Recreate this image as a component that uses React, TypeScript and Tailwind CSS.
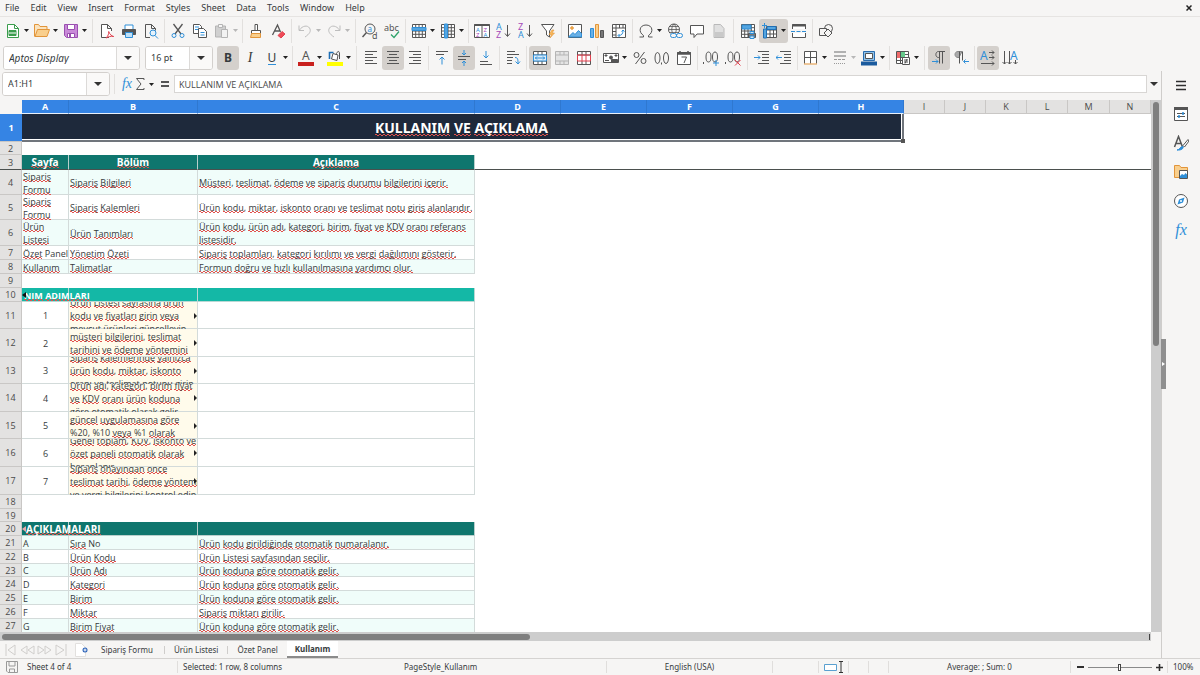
import type { ReactNode } from 'react'

const INK = '#555555'
const BLUE = '#2f8fd8'

function Ic({ children, c = INK }: { children: ReactNode; c?: string }) {
  return (
    <svg viewBox="0 0 16 16" className="h-4 w-4 shrink-0" fill="none" stroke={c}>
      {children}
    </svg>
  )
}

function Caret({ dim }: { dim?: boolean }) {
  return (
    <svg viewBox="0 0 5 3" className="h-[3px] w-[5px] shrink-0">
      <path d="M0 0h5L2.5 3z" fill={dim ? '#b8b8b8' : '#222'} />
    </svg>
  )
}

function BigCaret() {
  return (
    <svg viewBox="0 0 8 4" className="h-1 w-2 shrink-0">
      <path d="M0 0h8L4 4z" fill="#333" />
    </svg>
  )
}

type ToolProps = { label: string; on?: boolean; menu?: boolean; dim?: boolean; children: ReactNode }

function Tool({ label, on, menu, dim, children }: ToolProps) {
  return (
    <div className={`flex shrink-0 items-center rounded-[3px] ${on ? 'bg-[#d4d0cc]' : ''}`}>
      <button type="button" aria-label={label} className="flex h-6 w-[22px] items-center justify-center">
        {children}
      </button>
      {menu && (
        <button type="button" aria-label={`${label} options`} className="flex h-6 w-[7px] items-center justify-start">
          <Caret dim={dim} />
        </button>
      )}
    </div>
  )
}

function Sep({ wide }: { wide?: boolean }) {
  return (
    <div className={`flex h-6 shrink-0 justify-center ${wide ? 'w-[7px]' : 'w-[5px]'}`}>
      <div className="w-px bg-[#e2e0de]" />
    </div>
  )
}

const GRID = 'M1.5 1.5h13v13h-13zM1.5 4.7h13M1.5 8h13M1.5 11.3h13M4.7 1.5v13M8 1.5v13M11.3 1.5v13'

type SortProps = { top: string; bottom: string; topColor: string; bottomColor: string }

function SortGlyph({ top, bottom, topColor, bottomColor }: SortProps) {
  return (
    <Ic>
      <text x="0" y="7" fontSize="9" fill={topColor} stroke="none">{top}</text>
      <text x="0" y="15" fontSize="9" fill={bottomColor} stroke="none">{bottom}</text>
      <path d="M11.5 2v11M9 10.5l2.500 3 2.500-3" />
    </Ic>
  )
}

function StandardBar() {
  return (
    <div className="flex h-7 items-center border-t border-[#e6e4e2] pl-0.5">
      <Tool label="New" menu>
        <Ic c="#3a9d4c">
          <path d="M2.5 1.5h7l4 4v9h-11z" fill="#fff" />
          <path d="M9.5 1.5v4h4" />
          <path d="M4 7.5h7v5H4z" fill="#3a9d4c" />
          <path d="M4 10h7" stroke="#fff" />
        </Ic>
      </Tool>
      <Tool label="Open" menu>
        <Ic c="#e2953a">
          <path d="M.5 13.5v-12h4l1.5 2h7v3" fill="#fbe3bd" />
          <path d="M1 13.5l2.5-7h12l-2.500 7z" fill="#f9cf8d" />
        </Ic>
      </Tool>
      <Tool label="Save" menu>
        <Ic c="#9a4fb0">
          <path d="M1.5 1.5h13v13h-11l-2-2z" fill="#c98ad8" />
          <path d="M4.5 1.5h7v5h-7z" fill="#fff" />
          <path d="M4.5 10.5h7v4h-7z" fill="#fff" />
          <path d="M6 11h2v3H6z" fill="#9a4fb0" stroke="none" />
        </Ic>
      </Tool>
      <Sep wide />
      <Tool label="Export as PDF">
        <Ic>
          <path d="M10 14.5H2.5v-13h6l4 4V8M8.5 1.5v4h4" fill="#fff" />
          <path d="M7 15c2-2 3-4 2.700-6.500 1 3 3 4.500 5 5-3-.5-5 0-7.700 1.500z" stroke="#e0414f" />
        </Ic>
      </Tool>
      <Tool label="Print">
        <Ic>
          <path d="M4 6V2h8v4" stroke={BLUE} fill="#fff" />
          <path d="M1.5 6.5h13v5h-13z" fill="#555" />
          <path d="M4.5 9.5h7v5h-7z" fill="#bfe0f7" stroke={BLUE} />
        </Ic>
      </Tool>
      <Tool label="Print preview">
        <Ic>
          <path d="M7 14.5H2.5v-13h6l4 4v2M8.5 1.5v4h4" />
          <circle cx="10" cy="10" r="3" stroke={BLUE} fill="#e4f2fc" />
          <path d="M12 12.500l3 3" stroke={BLUE} />
        </Ic>
      </Tool>
      <Sep />
      <Tool label="Cut">
        <Ic>
          <path d="M3.5 1L11 11M12.5 1L5 11" strokeWidth={1.3} />
          <circle cx="4" cy="12.5" r="2" stroke={BLUE} />
          <circle cx="12" cy="12.5" r="2" stroke={BLUE} />
        </Ic>
      </Tool>
      <Tool label="Copy">
        <Ic>
          <path d="M1.5 1.5h6l2 2v7h-8z" fill="#fff" />
          <path d="M6.5 5.500h5l3 3v6h-8z" fill="#fff" />
          <path d="M3 4h4M3 6.5h3M8.5 9.5h4M8.5 12h4" stroke={BLUE} />
        </Ic>
      </Tool>
      <Tool label="Paste" menu dim>
        <Ic c="#b4b4b4">
          <path d="M1.5 3h10v11h-10z" fill="#d0d0d0" />
          <path d="M4.5 1.5h4v3h-4z" fill="#f5f5f5" />
          <path d="M7.5 6.5h6v8h-6z" fill="#f2f2f2" />
        </Ic>
      </Tool>
      <Sep />
      <Tool label="Clone formatting">
        <Ic>
          <path d="M7 1.5h2.500v6H7zM3.5 7.5h9v3h-9z" fill="#fff" />
          <path d="M3.5 10.5h9v4h-10z" fill="#f9cf8d" stroke="#e2953a" />
        </Ic>
      </Tool>
      <Tool label="Clear formatting">
        <Ic>
          <path d="M2.5 12L7.500 2l3 7M4.5 8h5" strokeWidth={1.3} />
          <path d="M8 12.500l4-4 3 2.500-4 4z" fill="#ef4b58" stroke="#e0414f" />
        </Ic>
      </Tool>
      <Sep />
      <Tool label="Undo" menu dim>
        <Ic c="#bdbdbd"><path d="M2 2.500v5h5M2.500 7c3-4.500 8-5 10-2 2 3 0 6-4.500 9" /></Ic>
      </Tool>
      <Tool label="Redo" menu dim>
        <Ic c="#bdbdbd"><path d="M14 2.500v5H9M13.500 7c-3-4.500-8-5-10-2-2 3 0 6 4.500 9" /></Ic>
      </Tool>
      <Sep wide />
      <Tool label="Find and replace">
        <Ic>
          <circle cx="8" cy="6" r="5" />
          <path d="M4.5 9.500L.5 14" strokeWidth={1.5} />
          <text x="5.500" y="8.500" fontSize="8" fill={BLUE} stroke="none">a</text>
          <text x="10" y="15.500" fontSize="9" fill={INK} stroke="none">d</text>
        </Ic>
      </Tool>
      <Tool label="Spelling">
        <Ic>
          <text x="0" y="8" fontSize="9" fill={INK} stroke="none">abc</text>
          <path d="M7 11.500l3 3 5-6" stroke="#2fa36b" strokeWidth={1.3} />
        </Ic>
      </Tool>
      <Sep />
      <Tool label="Row" menu>
        <Ic><path d={GRID} fill="#fff" /><path d="M1 4.500h14v3H1z" fill="#54a5e0" stroke={BLUE} /></Ic>
      </Tool>
      <Tool label="Column" menu>
        <Ic><path d={GRID} fill="#fff" /><path d="M4.500 1h3v14h-3z" fill="#54a5e0" stroke={BLUE} /></Ic>
      </Tool>
      <Sep />
      <Tool label="Sort">
        <Ic>
          <path d="M.5 1.5h15v13H.5zM8 2v12" fill="#fff" />
          <path d="M.5 2h15" strokeWidth={2} />
          <g fontSize="6" stroke="none">
            <text x="2" y="8.500" fill={BLUE}>A</text>
            <text x="2" y="14" fill="#a548b8">Z</text>
            <text x="9.500" y="8.500" fill="#a548b8">Z</text>
            <text x="9.500" y="14" fill={BLUE}>A</text>
          </g>
        </Ic>
      </Tool>
      <Tool label="Sort ascending"><SortGlyph top="A" bottom="Z" topColor={BLUE} bottomColor="#a548b8" /></Tool>
      <Tool label="Sort descending"><SortGlyph top="Z" bottom="A" topColor="#a548b8" bottomColor={BLUE} /></Tool>
      <Tool label="AutoFilter">
        <Ic>
          <path d="M1.5 1.500h12.500L9.500 8v6l-3-2V8z" fill="#fff" />
          <path d="M12 7l-3 4.500h2.500L10 15l4.500-5H12l2-3z" fill="#f9b95a" stroke="#e2953a" strokeWidth={0.6} />
        </Ic>
      </Tool>
      <Sep />
      <Tool label="Image">
        <Ic>
          <path d="M1.5 1.5h13v13h-13z" fill="#fff" />
          <path d="M2 13.500l4-4 2 2 3.500-4 3 3v3.500H2z" fill="#6ab1e6" stroke={BLUE} />
          <circle cx="5" cy="5" r="1.300" fill="#f9b95a" stroke="#e2953a" />
        </Ic>
      </Tool>
      <Tool label="Chart">
        <Ic>
          <path d="M1.5 5.5h3v9h-3z" fill="#6ab1e6" stroke={BLUE} />
          <path d="M6.5 1.5h3v13h-3z" fill="#f9cf8d" stroke="#e2953a" />
          <path d="M11.5 7.5h3v7h-3z" fill="#777" />
        </Ic>
      </Tool>
      <Tool label="Pivot table">
        <Ic>
          <path d="M1.5 1.5h13v13h-13zM1.5 5h13M5 1.5v13M8.500 1.500V5M12 1.500V5M1.500 8.500H5M1.500 12H5" fill="#fff" />
          <path d="M7.500 12.500c3 0 4.500-1.500 4.500-5M10.500 8.500L12 7l1.500 1.500M8.500 11L7 12.500 8.500 14" stroke={BLUE} />
        </Ic>
      </Tool>
      <Sep />
      <Tool label="Special character" menu>
        <Ic><path d="M1.500 14h4v-1.500C0 9 1.500 2 8 2s8 7 2.500 10.500V14h4" /></Ic>
      </Tool>
      <Tool label="Hyperlink">
        <Ic>
          <circle cx="7" cy="6.500" r="5.500" />
          <path d="M1.500 6.500h11M7 1c-3 3-3 8 0 11M7 1c3 3 3 8 0 11M2.500 3.500h9M2.500 9.500h9" strokeWidth={0.8} />
          <path d="M3.500 10h11v5h-11z" fill="#f6f5f4" stroke="none" />
          <rect x="3.500" y="10.500" width="6" height="4" rx="2" stroke={BLUE} />
          <rect x="9.500" y="10.500" width="6" height="4" rx="2" stroke={BLUE} />
        </Ic>
      </Tool>
      <Tool label="Comment">
        <Ic><path d="M1.5 2.500h13v8.500H8l-3 3.500V11H1.500z" fill="#fff" /></Ic>
      </Tool>
      <Tool label="Headers and footers">
        <Ic c="#b9b9b9"><path d="M3 1.500h6.500l3.500 4v9H3z" fill="#e0e0e0" /><path d="M4 9h8v5H4z" fill="#c9c9c9" stroke="none" /></Ic>
      </Tool>
      <Sep wide />
      <Tool label="Print area">
        <Ic>
          <path d={GRID} fill="#fff" />
          <path d="M2 2h9v4H2z" fill="#54a5e0" stroke={BLUE} />
          <path d="M8.500 10.500h7v4h-7z" fill="#777" />
          <path d="M10 8.500h4v2h-4zM10 13h4v2.500h-4z" fill="#cfe6f8" stroke={BLUE} />
        </Ic>
      </Tool>
      <Tool label="Freeze rows and columns" on menu>
        <Ic>
          <path d="M4.500 3.500h10v11h-10zM4.500 7h10M4.500 11h10M8 3.500v11M11.500 3.500v11" fill="#fff" />
          <path d="M1.500 6h3v9h-3zM5 3.500h9v3H5z" fill="#54a5e0" stroke="#1f6fb5" />
          <path d="M2.500 0v5M0 2.500h5" stroke={BLUE} />
        </Ic>
      </Tool>
      <Tool label="Split window">
        <Ic>
          <path d="M1.500 6V1.500h13V6M1.500 10v4.500h13V10" fill="#fff" />
          <path d="M1 2.500h14" strokeWidth={2} />
          <path d="M0 8.500h16" stroke={BLUE} strokeDasharray="4 1.500" />
        </Ic>
      </Tool>
      <Sep />
      <Tool label="Draw functions">
        <Ic>
          <circle cx="10.500" cy="5.500" r="4" />
          <path d="M1.500 5.500h7v7h-7z" fill="#f6f5f4" />
          <path d="M10 6l4 4-4 4-4-4z" fill="#f6f5f4" />
        </Ic>
      </Tool>
    </div>
  )
}

function Combo({ label, value, size, italic }: { label: string; value: string; size: string; italic?: boolean }) {
  return (
    <div className={`flex h-6 shrink-0 overflow-hidden rounded-[3px] border border-[#d3d0cd] bg-white ${size}`}>
      <input
        aria-label={label}
        defaultValue={value}
        className={`min-w-0 flex-1 bg-white pl-[5px] outline-none ${italic ? 'text-[10px] italic' : ''}`}
      />
      <button type="button" aria-label={`${label} list`} className="flex w-[23px] items-center justify-center border-l border-[#dcdad8] bg-[#faf9f8]">
        <BigCaret />
      </button>
    </div>
  )
}

function FormatBar() {
  return (
    <div className="flex h-[27px] items-center pl-[3px]">
      <Combo label="Font name" value="Aptos Display" size="w-[137px]" italic />
      <div className="w-[5px] shrink-0" />
      <Combo label="Font size" value="16 pt" size="w-[68px]" />
      <div className="w-1 shrink-0" />
      <Tool label="Bold" on><span className="text-[12px] font-bold">B</span></Tool>
      <Tool label="Italic"><span className="font-['Liberation_Serif',serif] text-[14px] italic">I</span></Tool>
      <Tool label="Underline" menu><span className="border-b border-[#2f8fd8] text-[12px] leading-[13px]">U</span></Tool>
      <Sep />
      <Tool label="Font color" menu>
        <Ic>
          <text x="4" y="10" fontSize="12" fill={INK} stroke="none">A</text>
          <path d="M0 14h16" stroke="#c9211e" strokeWidth={4} />
        </Ic>
      </Tool>
      <Tool label="Highlighting" menu>
        <Ic>
          <path d="M6 3.500l5 1.500-1 5.500-5.500-1.500z" fill="#fff" />
          <path d="M2.500 9V2.500h4" stroke="#1f6fb5" strokeWidth={1.6} />
          <path d="M9 5c1-4 3.500-5 3.500-1v5" />
          <path d="M0 14h16" stroke="#ffff00" strokeWidth={4} />
        </Ic>
      </Tool>
      <Sep wide />
      <Tool label="Align left"><Ic><path d="M2 1.500h12M2 4.500h8M2 7.500h12M2 10.500h8M2 13.500h12" /></Ic></Tool>
      <Tool label="Align center" on><Ic><path d="M2 1.500h12M4 4.500h8M2 7.500h12M4 10.500h8M2 13.500h12" /></Ic></Tool>
      <Tool label="Align right"><Ic><path d="M2 1.500h12M6 4.500h8M2 7.500h12M6 10.500h8M2 13.500h12" /></Ic></Tool>
      <Sep />
      <Tool label="Align top">
        <Ic><path d="M2 1.500h12M2 4.500h8" /><path d="M8 14.500V7M5.500 9.500L8 7l2.500 2.500" stroke={BLUE} /></Ic>
      </Tool>
      <Tool label="Center vertically" on>
        <Ic>
          <path d="M2 6.500h12M2 9.500h8" />
          <path d="M8 0v5M6 3l2 2 2-2M8 16v-5M6 13l2-2 2 2" stroke={BLUE} />
        </Ic>
      </Tool>
      <Tool label="Align bottom">
        <Ic><path d="M2 11.500h8M2 14.500h12" /><path d="M8 1v7M5.500 5.500L8 8l2.500-2.500" stroke={BLUE} /></Ic>
      </Tool>
      <Sep />
      <Tool label="Wrap text">
        <Ic>
          <path d="M2 1.500h8M2 4.500h12M2 7.500h6M2 10.500h5M2 13.500h5" />
          <path d="M10 7.500c3 0 3 2 3 6M10.500 11.500l2.500 2.500 2-2.500" stroke={BLUE} />
        </Ic>
      </Tool>
      <Sep />
      <Tool label="Merge and center cells" on>
        <Ic>
          <path d="M1.500 1.500h13v13h-13zM1.500 5h13M1.500 11h13M6 1.500V5M10 1.500V5M6 11v3.500M10 11v3.500" fill="#fff" />
          <path d="M1.500 5h13v6h-13zM3 8h10M5 6.500L3.500 8 5 9.500M11 6.500L12.500 8 11 9.500" fill="#dcecf9" stroke={BLUE} />
        </Ic>
      </Tool>
      <Tool label="Merge cells">
        <Ic c="#b5b5b5"><path d="M1.500 1.500h13v13h-13zM1.500 5h13M1.500 11h13M6 1.500V5M10 1.500V5M6 11v3.500M10 11v3.500" fill="#e4e4e4" /></Ic>
      </Tool>
      <Tool label="Unmerge cells">
        <Ic>
          <path d="M1.500 1.500h13v13h-13zM1.500 5h13M6 1.500V5M10 1.500V5M6 11v3.500M10 11v3.500" fill="#fff" />
          <path d="M1.500 5h13v6h-13zM6 5v6M10 5v6" stroke="#e0414f" />
        </Ic>
      </Tool>
      <Sep />
      <Tool label="Currency" menu>
        <Ic>
          <path d="M.5 3.500h15v9H.5z" fill="#fff" />
          <path d="M2 5h2v1H2zM12 5h2v1h-2zM8.500 9.500h6v3h-6z" fill={INK} />
          <circle cx="8" cy="7.500" r="1.500" fill={INK} />
          <path d="M2 10.500h4M5 12.500h4" />
        </Ic>
      </Tool>
      <Tool label="Percent">
        <Ic><circle cx="4.500" cy="5" r="2.500" /><circle cx="11.500" cy="11" r="2.500" /><path d="M12.500 2l-9 12" /></Ic>
      </Tool>
      <Tool label="Number">
        <Ic><ellipse cx="3.500" cy="8" rx="2.500" ry="5.500" /><ellipse cx="12" cy="8" rx="2.500" ry="5.500" /><path d="M7.500 12.500v2" /></Ic>
      </Tool>
      <Tool label="Date">
        <Ic>
          <path d="M1.500 2.500h13v12h-13z" fill="#fff" />
          <path d="M1 3.500h14" strokeWidth={2.5} />
          <path d="M4 1v3M12 1v3" strokeWidth={1.5} />
          <path d="M5.500 7h5L8 13" />
        </Ic>
      </Tool>
      <Sep />
      <Tool label="Add decimal place">
        <Ic><ellipse cx="5.500" cy="7" rx="2.500" ry="5" /><ellipse cx="12" cy="7" rx="2.500" ry="5" /><path d="M.5 12v2" /><path d="M13 10v6M10 13h6" stroke={BLUE} /></Ic>
      </Tool>
      <Tool label="Delete decimal place">
        <Ic><ellipse cx="5.500" cy="7" rx="2.500" ry="5" /><ellipse cx="12" cy="7" rx="2.500" ry="5" /><path d="M.5 12v2" /><path d="M10 10l5.500 5.500M15.500 10L10 15.500" stroke="#e0414f" /></Ic>
      </Tool>
      <Sep wide />
      <Tool label="Increase indent">
        <Ic><path d="M4 1.500h11M8 4.500h7M8 7.500h7M8 10.500h7M4 13.500h11" /><path d="M0 7.500h6M4 5.500l2 2-2 2" stroke={BLUE} /></Ic>
      </Tool>
      <Tool label="Decrease indent">
        <Ic><path d="M4 1.500h11M8 4.500h7M8 7.500h7M8 10.500h7M4 13.500h11" /><path d="M0 7.500h6M2 5.500l-2 2 2 2" stroke={BLUE} /></Ic>
      </Tool>
      <Sep />
      <Tool label="Borders" menu>
        <Ic><path d="M1.500 13.500v-12h12v12M7.500 1.500v12M1.500 7.500h12" fill="#fff" /><path d="M1 14h13" stroke="#e2953a" /></Ic>
      </Tool>
      <Tool label="Border style" menu dim>
        <Ic c="#9a9a9a"><path d="M2 2h12M2 6h12" strokeWidth={1.5} /><path d="M2 9.500h12" strokeDasharray="3 1" /><path d="M2 13.500h12" strokeDasharray="1 1" /></Ic>
      </Tool>
      <Tool label="Border color" menu>
        <Ic>
          <path d="M2.500 1.500h11v9h-11z" fill="#8fc2ea" stroke="#2a6cae" />
          <path d="M4.500 3.500h7v5h-7z" fill="#fff" />
          <path d="M0 13.500h16" stroke="#1b5b9e" strokeWidth={4} />
        </Ic>
      </Tool>
      <Sep />
      <Tool label="Conditional formatting" menu>
        <Ic>
          <path d="M1.500 1.500h12v12h-12zM1.500 4.500h12M1.500 7.500h12M1.500 10.500h12M5.500 1.500v12M9.500 1.500v12" fill="#fff" />
          <path d="M2 2h3v6H2z" fill="#ef6b6b" stroke="none" />
          <path d="M6 2h4v5H6z" fill="#65c98b" stroke="none" />
          <path d="M7.500 7.500h7v7h-7zM9 10h4M9 12h4M12 9l-2 4.500" fill="#fff" />
        </Ic>
      </Tool>
      <Sep wide />
      <Tool label="Left to right" on>
        <Ic><path d="M14 1.500H7.500c-3.500 0-3.500 6 0 6h1M8.500 1.500v12M11.500 1.500v12" /><path d="M1 11.500h6M5 9.500l2 2-2 2" stroke={BLUE} /></Ic>
      </Tool>
      <Tool label="Right to left">
        <Ic><path d="M9 1.500H5c-4 0-4 6 0 6h1z" fill="#aaa" stroke="#888" /><path d="M6.500 1.500v12M9.500 1.500v9" /><path d="M16 11.500h-5M12.500 9.500l-2 2 2 2" stroke={BLUE} /></Ic>
      </Tool>
      <Sep />
      <Tool label="Text left to right" on>
        <Ic>
          <text x="0" y="9.500" fontSize="12" fill={BLUE} stroke="none">A</text>
          <path d="M9 2.500h5M12 .5l2 2-2 2M9 7.500h5M12 5.500l2 2-2 2M1 13.500h13M12 11.500l2 2-2 2" />
        </Ic>
      </Tool>
      <Tool label="Text top to bottom">
        <Ic>
          <text x="8" y="9.500" fontSize="12" fill={BLUE} stroke="none">A</text>
          <path d="M2.500 1v13M.5 12l2 2 2-2M7.500 1v13M5.500 12l2 2 2-2M13.500 10v4M11.500 12l2 2 2-2" />
        </Ic>
      </Tool>
    </div>
  )
}

function FormulaBar() {
  return (
    <div className="flex h-7 items-center pb-0.5 pl-0.5">
      <Combo label="Name box" value="A1:H1" size="w-[108px]" />
      <div className="mx-1 h-5 w-px shrink-0 bg-[#e2e0de]" />
      <button type="button" aria-label="Function wizard" className="w-4 shrink-0 text-center font-['Liberation_Serif',serif] text-[14px] italic leading-4 text-[#2f8fd8]">
        fx
      </button>
      <button type="button" aria-label="Select function" className="flex shrink-0 items-center gap-1">
        <svg viewBox="0 0 10 14" className="h-3.5 w-2.5" fill="none" stroke={INK}>
          <path d="M9 3V1.500H1.500L6 7l-4.500 5.500H9V11" />
        </svg>
        <Caret />
      </button>
      <button type="button" aria-label="Formula" className="ml-1.5 mr-1 flex w-2.5 shrink-0 flex-col gap-0.5 px-px">
        <span className="h-0.5 w-full bg-[#555]" />
        <span className="h-0.5 w-full bg-[#555]" />
      </button>
      <input
        aria-label="Input line"
        defaultValue="KULLANIM VE AÇIKLAMA"
        className="h-[18px] min-w-0 flex-1 border border-[#d8d6d4] bg-white pl-1 font-['Open_Sans',sans-serif] text-[#4a4a4a] outline-none"
      />
      <button type="button" aria-label="Expand formula bar" className="flex w-3.5 shrink-0 justify-center"><BigCaret /></button>
    </div>
  )
}

const COLUMNS = [
  { name: 'A', width: 'w-[47px]' },
  { name: 'B', width: 'w-[129px]' },
  { name: 'C', width: 'w-[277px]' },
  { name: 'D', width: 'w-[86px]' },
  { name: 'E', width: 'w-[86px]' },
  { name: 'F', width: 'w-[86px]' },
  { name: 'G', width: 'w-[86px]' },
  { name: 'H', width: 'w-[85px]' },
  { name: 'I', width: 'w-[41px]' },
  { name: 'J', width: 'w-[41px]' },
  { name: 'K', width: 'w-[41px]' },
  { name: 'L', width: 'w-[41px]' },
  { name: 'M', width: 'w-[42px]' },
  { name: 'N', width: '' },
]

type Row = {
  n: number
  h: string
  kind?: 'head' | 'band' | 'section' | 'title' | 'plain' | 'step' | 'blank'
  cells?: string[]
}

const H13 = 'h-[13px]'
const H14 = 'h-[14px]'
const H25 = 'h-[25px]'
const H27 = 'h-[27px]'
const H28 = 'h-[28px]'

const ROWS: Row[] = [
  { n: 2, h: H13 },
  { n: 3, h: 'h-[15px]', kind: 'head', cells: ['Sayfa', 'Bölüm', 'Açıklama'] },
  { n: 4, h: H25, kind: 'band', cells: ['Sipariş\nFormu', 'Sipariş Bilgileri', 'Müşteri, teslimat, ödeme ve sipariş durumu bilgilerini içerir.'] },
  { n: 5, h: H25, kind: 'plain', cells: ['Sipariş\nFormu', 'Sipariş Kalemleri', 'Ürün kodu, miktar, iskonto oranı ve teslimat notu giriş alanlarıdır.'] },
  { n: 6, h: 'h-[26px]', kind: 'band', cells: ['Ürün\nListesi', 'Ürün Tanımları', 'Ürün kodu, ürün adı, kategori, birim, fiyat ve KDV oranı referans\nlistesidir.'] },
  { n: 7, h: H14, kind: 'plain', cells: ['Özet Panel', 'Yönetim Özeti', 'Sipariş toplamları, kategori kırılımı ve vergi dağılımını gösterir.'] },
  { n: 8, h: H14, kind: 'band', cells: ['Kullanım', 'Talimatlar', 'Formun doğru ve hızlı kullanılmasına yardımcı olur.'] },
  { n: 9, h: H14 },
  { n: 10, h: H14, kind: 'section', cells: ['NIM ADIMLARI', '', ''] },
  { n: 11, h: H27, kind: 'step', cells: ['1', 'Ürün Listesi sayfasına ürün\nkodu ve fiyatları girin veya\nmevcut ürünleri güncelleyin.', ''] },
  { n: 12, h: H28, kind: 'step', cells: ['2', 'müşteri bilgilerini, teslimat\ntarihini ve ödeme yöntemini', ''] },
  { n: 13, h: H27, kind: 'step', cells: ['3', 'Sipariş kalemlerinde yalnızca\nürün kodu, miktar, iskonto\noranı ve teslimat notunu girin.', ''] },
  { n: 14, h: H28, kind: 'step', cells: ['4', 'Ürün adı, kategori, birim fiyat\nve KDV oranı ürün koduna\ngöre otomatik olarak gelir.', ''] },
  { n: 15, h: H27, kind: 'step', cells: ['5', 'güncel uygulamasına göre\n%20, %10 veya %1 olarak', ''] },
  { n: 16, h: H28, kind: 'step', cells: ['6', 'Genel toplam, KDV, iskonto ve\nözet paneli otomatik olarak\nhesaplanır.', ''] },
  { n: 17, h: H28, kind: 'step', cells: ['7', 'Sipariş onayından önce\nteslimat tarihi, ödeme yöntemi\nve vergi bilgilerini kontrol edin.', ''] },
  { n: 18, h: H14 },
  { n: 19, h: H13 },
  { n: 20, h: H14, kind: 'title', cells: ['AÇIKLAMALARI', '', ''] },
  { n: 21, h: H14, kind: 'band', cells: ['A', 'Sıra No', 'Ürün kodu girildiğinde otomatik numaralanır.'] },
  { n: 22, h: H14, kind: 'plain', cells: ['B', 'Ürün Kodu', 'Ürün Listesi sayfasından seçilir.'] },
  { n: 23, h: H13, kind: 'band', cells: ['C', 'Ürün Adı', 'Ürün koduna göre otomatik gelir.'] },
  { n: 24, h: H14, kind: 'plain', cells: ['D', 'Kategori', 'Ürün koduna göre otomatik gelir.'] },
  { n: 25, h: H14, kind: 'band', cells: ['E', 'Birim', 'Ürün koduna göre otomatik gelir.'] },
  { n: 26, h: H14, kind: 'plain', cells: ['F', 'Miktar', 'Sipariş miktarı girilir.'] },
  { n: 27, h: H14, kind: 'band', cells: ['G', 'Birim Fiyat', 'Ürün koduna göre otomatik gelir.'] },
]

const KNOWN = /^(Panel|No|[A-G]|%?\d+)$/

// Two one-pixel rows of dashes, half a period apart, make the red zigzag.
const WAVE =
  'bg-[image:linear-gradient(90deg,#e0524e_50%,transparent_50%),linear-gradient(90deg,transparent_50%,#e0524e_50%)] bg-[length:4px_1px] bg-[position:left_0_bottom_2px,left_0_bottom_1px] bg-repeat-x'

function Spell({ text }: { text: string }) {
  return (
    <span>
      {text.split(/([\s,]+)/).map((part, i) =>
        /^[\s,]*$/.test(part) || KNOWN.test(part) ? part : <span key={i} className={WAVE}>{part}</span>,
      )}
    </span>
  )
}

const FILLS = {
  head: 'bg-[#0f766e] border-[#b9cfcc] text-white font-bold text-[10px]',
  title: 'bg-[#0f766e] border-[#b9cfcc] text-white font-bold text-[10px]',
  section: 'bg-[#14b8a6] border-[#b9d8d4] text-white font-bold',
  band: 'bg-[#f0fdfa] border-[#d3dbda]',
  plain: 'bg-white border-[#d3dbda]',
  step: 'bg-white border-[#d3dbda]',
  blank: 'bg-white border-white',
}

// Section titles spill over their neighbours, everything else is clipped to the cell.
const BOXES = {
  head: 'justify-center overflow-hidden',
  title: 'pl-1',
  section: 'pl-0.5',
  band: 'pl-px overflow-hidden',
  plain: 'pl-px overflow-hidden',
  step: 'pl-px overflow-hidden',
  blank: '',
}

function SheetRow({ row }: { row: Row }) {
  const kind = row.kind ?? 'blank'
  const bottom = row.n === 3 ? 'border-b-[#4b504e]' : ''
  return (
    <tr>
      <th scope="row" className={`border-b border-r border-[#c9c7c5] bg-[#e3e2e1] p-0 font-normal text-[#4a4a4a] ${bottom}`}>
        <div className={`-mb-px flex items-center justify-center leading-3 ${row.h}`}>{row.n}</div>
      </th>
      {(row.cells ?? ['', '', '']).map((text, i) => {
        const step = kind === 'step'
        const fill = step && i === 1 ? 'bg-[#fffbeb] border-[#d3dbda]' : FILLS[kind]
        return (
          <td key={i} className={`border-b border-r p-0 ${fill} ${bottom}`}>
            <div className={`relative -mb-px flex items-center whitespace-pre leading-[13px] ${row.h} ${BOXES[kind]} ${step && i === 0 ? 'justify-center' : ''}`}>
              {(kind === 'section' || kind === 'title') && i === 0 && (
                <svg viewBox="0 0 4 6" className="absolute left-0 top-1 h-1.5 w-1">
                  <path d="M4 0v6L0 3z" fill={kind === 'section' ? '#111' : '#e7a9a9'} />
                </svg>
              )}
              {text && <Spell text={text} />}
              {step && i === 1 && (
                <svg viewBox="0 0 3 6" className="absolute right-0 h-1.5 w-[3px]">
                  <path d="M0 0v6l3-3z" fill="#222" />
                </svg>
              )}
            </div>
          </td>
        )
      })}
      <td colSpan={11} className={`border-b border-white p-0 ${bottom}`} />
    </tr>
  )
}

function Sheet() {
  return (
    <table className="w-full table-fixed border-separate border-spacing-0 font-['Open_Sans',sans-serif]">
      <colgroup>
        <col className="w-[22px]" />
        {COLUMNS.map((c) => <col key={c.name} className={c.width} />)}
      </colgroup>
      <thead>
        <tr>
          <td className="bg-[#f6f5f4] p-0" />
          {COLUMNS.map((c, i) => (
            <th
              key={c.name}
              scope="col"
              className={`h-3.5 border-b border-r p-0 leading-3 ${i < 8 ? 'border-[#2f78d0] border-b-[#e8f1fb] bg-[#3584e4] font-bold text-white' : 'border-[#c9c7c5] bg-[#e3e2e1] font-normal text-[#4a4a4a]'}`}
            >
              {c.name}
            </th>
          ))}
        </tr>
      </thead>
      <tbody>
        <tr>
          <th scope="row" className="h-7 border-b border-[#c9c7c5] bg-[#3584e4] p-0 font-bold text-white">1</th>
          <td colSpan={8} className="relative border-b-2 border-r-2 border-[#70757c] p-0">
            <div className="flex h-[26px] items-center justify-center border-b border-r border-white bg-[#1e293b] pt-0.5 font-['Noto_Sans',sans-serif] text-[14px] font-bold leading-5 text-white">
              <Spell text="KULLANIM VE AÇIKLAMA" />
            </div>
            <span className="absolute -bottom-[3px] -right-[3px] h-1 w-1 bg-[#555]" />
          </td>
          <td colSpan={6} className="p-0" />
        </tr>
        {ROWS.map((row) => <SheetRow key={row.n} row={row} />)}
      </tbody>
    </table>
  )
}

function SheetTabs() {
  return (
    <div className="flex h-[17px] shrink-0 items-stretch bg-[#f6f5f4]">
      <button type="button" aria-label="Sheet navigation" className="ml-[5px] flex w-[62px] items-center">
        <svg viewBox="0 0 62 12" className="h-3 w-[62px]" fill="#f6f5f4" stroke="#d0cecc">
          <path d="M1 0v12M10 1L3 6l7 5zM22 2l-6 4 6 4zM29 2l-6 4 6 4zM33 2l6 4-6 4zM40 2l6 4-6 4zM51 1l8 5-8 5zM61 0v12" />
        </svg>
      </button>
      <button type="button" aria-label="Add sheet" className="ml-2 flex w-[15px] items-center">
        <svg viewBox="0 0 14 14" className="h-3.5 w-3.5">
          <path d="M.5.5h6l4 4v9H.5z" fill="#fff" stroke="#e2e0de" />
          <circle cx="10" cy="7" r="2.500" fill="#2a62b8" />
          <path d="M10 5.500v3M8.500 7h3" stroke="#fff" />
        </svg>
      </button>
      <nav aria-label="Sheets" className="flex items-center text-[8px]">
        <a href="#siparis" className="px-[11px]">Sipariş Formu</a>
        <span className="h-2 w-px bg-[#cfcdcb]" />
        <a href="#urun" className="px-[9px]">Ürün Listesi</a>
        <span className="h-2 w-px bg-[#cfcdcb]" />
        <a href="#ozet" className="px-[9px]">Özet Panel</a>
        <a href="#kullanim" aria-current="page" className="h-full border-b-2 border-[#8b8b8b] bg-white px-2 pt-0.5 font-bold leading-3">Kullanım</a>
      </nav>
    </div>
  )
}

function SideBar() {
  return (
    <aside className="relative flex w-[39px] shrink-0 flex-col items-center gap-[5px] border-l border-[#cfcdcb] pt-0.5">
      <button type="button" aria-label="Sidebar settings" className="flex h-6 items-center">
        <Ic c="#2e2e2e"><path d="M3 4.500h10M3 8.500h10M3 12.500h10" strokeWidth={1.4} /></Ic>
      </button>
      <button type="button" aria-label="Properties" className="flex h-6 items-center">
        <Ic>
          <path d="M1.500 1.500h13v13h-13z" fill="#fff" />
          <path d="M1 2.500h14" strokeWidth={3} />
          <path d="M4 7.500h8M4 10.500h8" />
          <path d="M10 6v3M6 9v3" stroke={BLUE} strokeWidth={1.5} />
        </Ic>
      </button>
      <button type="button" aria-label="Styles" className="flex h-6 items-center">
        <Ic>
          <path d="M1.500 12L5.500 1.500 9.500 12M3 8.500h5" strokeWidth={1.5} />
          <path d="M15 4.500l-5 6 1.500 1.500L16 6z" fill="#fff" />
          <path d="M4 15c2.500 0 3-3.500 6-3.500 1 2-2 4-6 3.500z" fill={BLUE} stroke={BLUE} />
        </Ic>
      </button>
      <button type="button" aria-label="Gallery" className="flex h-6 items-center">
        <Ic>
          <path d="M1.500 13.500v-12h5l1.500 2h6.500v10z" fill="#f9cf8d" stroke="#e2953a" />
          <path d="M6.500 6.500h8v8h-8z" fill="#fff" />
          <path d="M7 14v-2l2-2 2 1 1.500-2 1.500 1.500V14z" fill={BLUE} stroke="none" />
        </Ic>
      </button>
      <button type="button" aria-label="Navigator" className="flex h-6 items-center">
        <Ic>
          <circle cx="8" cy="8" r="6.500" fill="#fff" />
          <path d="M11.500 4.500L10 9.500l-5.500 2L6 6.500z" fill={BLUE} stroke="none" />
          <circle cx="8" cy="8" r="1" fill="#fff" stroke="none" />
        </Ic>
      </button>
      <button type="button" aria-label="Functions" className="h-6 font-['Liberation_Serif',serif] text-[16px] italic leading-6 text-[#2f8fd8]">fx</button>
      <button type="button" aria-label="Hide sidebar" className="absolute -left-px top-[268px] flex h-[50px] w-[5px] items-center justify-center bg-[#8f8f8f]">
        <svg viewBox="0 0 3 4" className="h-1 w-[3px]"><path d="M0 0v4l3-2z" fill="#fff" /></svg>
      </button>
    </aside>
  )
}

function StatusBar() {
  return (
    <footer className="flex h-[17px] shrink-0 items-center border-t border-[#d5d3d1] text-[8px]">
      <div className="flex w-[27px] shrink-0 justify-center pr-1">
        <svg viewBox="0 0 12 12" className="h-3 w-3" fill="none" stroke="#999">
          <path d="M.5.5h11v11H2l-1.500-1.500zM3 .5h6V5H3zM3.500 11.500V8h5v3.500" />
        </svg>
      </div>
      <span className="w-[150px] shrink-0">Sheet 4 of 4</span>
      <span className="w-[221px] shrink-0 border-l border-[#e0dedc] pl-[5px]">Selected: 1 row, 8 columns</span>
      <span className="min-w-0 flex-1 pl-1.5">PageStyle_Kullanım</span>
      <span className="w-[167px] shrink-0 border-x border-[#e0dedc] text-center">English (USA)</span>
      <span className="h-3 w-[46px] shrink-0 border-r border-[#e0dedc]" />
      <span className="flex h-3 w-[30px] shrink-0 items-center justify-center border-r border-[#e0dedc]">
        <svg viewBox="0 0 20 12" className="h-3 w-5" fill="none">
          <path d="M.5 3.500h12v6H.5z" stroke="#5aa0d0" fill="#fff" />
          <path d="M15 .5h4M15 11.500h4M17 .5v11" stroke="#333" />
        </svg>
      </span>
      <span className="h-3 w-5 shrink-0 border-r border-[#e0dedc]" />
      <span className="h-3 w-5 shrink-0 border-r border-[#e0dedc]" />
      <span className="w-[182px] shrink-0 border-r border-[#e0dedc] text-center">Average: ; Sum: 0</span>
      <button type="button" aria-label="Zoom out" className="ml-1.5 flex w-[7px] shrink-0"><span className="h-0.5 w-full bg-[#2e2e2e]" /></button>
      <input
        type="range"
        aria-label="Zoom"
        defaultValue={49}
        className="mx-1 h-3 w-16 shrink-0 appearance-none bg-transparent [&::-webkit-slider-runnable-track]:h-px [&::-webkit-slider-runnable-track]:bg-[#8a8a8a] [&::-webkit-slider-thumb]:-mt-[3px] [&::-webkit-slider-thumb]:h-[7px] [&::-webkit-slider-thumb]:w-[3px] [&::-webkit-slider-thumb]:appearance-none [&::-webkit-slider-thumb]:border [&::-webkit-slider-thumb]:border-[#444] [&::-webkit-slider-thumb]:bg-white"
      />
      <button type="button" aria-label="Zoom in" className="flex w-[7px] shrink-0">
        <svg viewBox="0 0 7 7" className="h-[7px] w-[7px]"><path d="M3.500 0v7M0 3.500h7" stroke="#2e2e2e" strokeWidth="1.600" /></svg>
      </button>
      <span className="ml-1 w-[33px] shrink-0 border-l border-[#e0dedc] pl-[5px]">100%</span>
    </footer>
  )
}

const MENUS = ['File', 'Edit', 'View', 'Insert', 'Format', 'Styles', 'Sheet', 'Data', 'Tools', 'Window', 'Help']

export default function App() {
  return (
    <div className="flex h-screen flex-col overflow-hidden bg-[#f6f5f4] font-['Noto_Sans','Open_Sans',sans-serif] text-[9px] leading-3 text-[#363b3d]">
      <div className="flex h-4 shrink-0 items-center gap-[11px] pl-[5px] pr-2">
        {MENUS.map((m) => <button key={m} type="button">{m}</button>)}
        <button type="button" aria-label="Close document" className="ml-auto">
          <svg viewBox="0 0 6 6" className="h-1.5 w-1.5"><path d="M.5.5l5 5M5.500.5l-5 5" stroke="#222" strokeWidth="1.500" /></svg>
        </button>
      </div>
      <StandardBar />
      <FormatBar />
      <div className="flex min-h-0 flex-1">
        <main className="flex min-w-0 flex-1 flex-col">
          <FormulaBar />
          <div className="flex min-h-0 flex-1 pt-px">
            <div className="flex min-w-0 flex-1 flex-col">
              <div className="min-h-0 flex-1 overflow-hidden bg-white">
                <Sheet />
              </div>
              <div className="flex h-[9px] shrink-0 items-center bg-[#cdcdcd] pl-0.5 pr-px">
                <div className="h-1.5 w-[46%] rounded-full bg-[#7f7f7f]" />
                <div className="ml-auto h-1.5 w-px bg-[#444]" />
              </div>
            </div>
            <div className="mb-[9px] w-2.5 shrink-0 bg-[#cdcdcd] px-0.5 pt-0.5">
              <div className="h-[46%] rounded-full bg-[#7f7f7f]" />
            </div>
          </div>
          <SheetTabs />
        </main>
        <SideBar />
      </div>
      <StatusBar />
    </div>
  )
}
